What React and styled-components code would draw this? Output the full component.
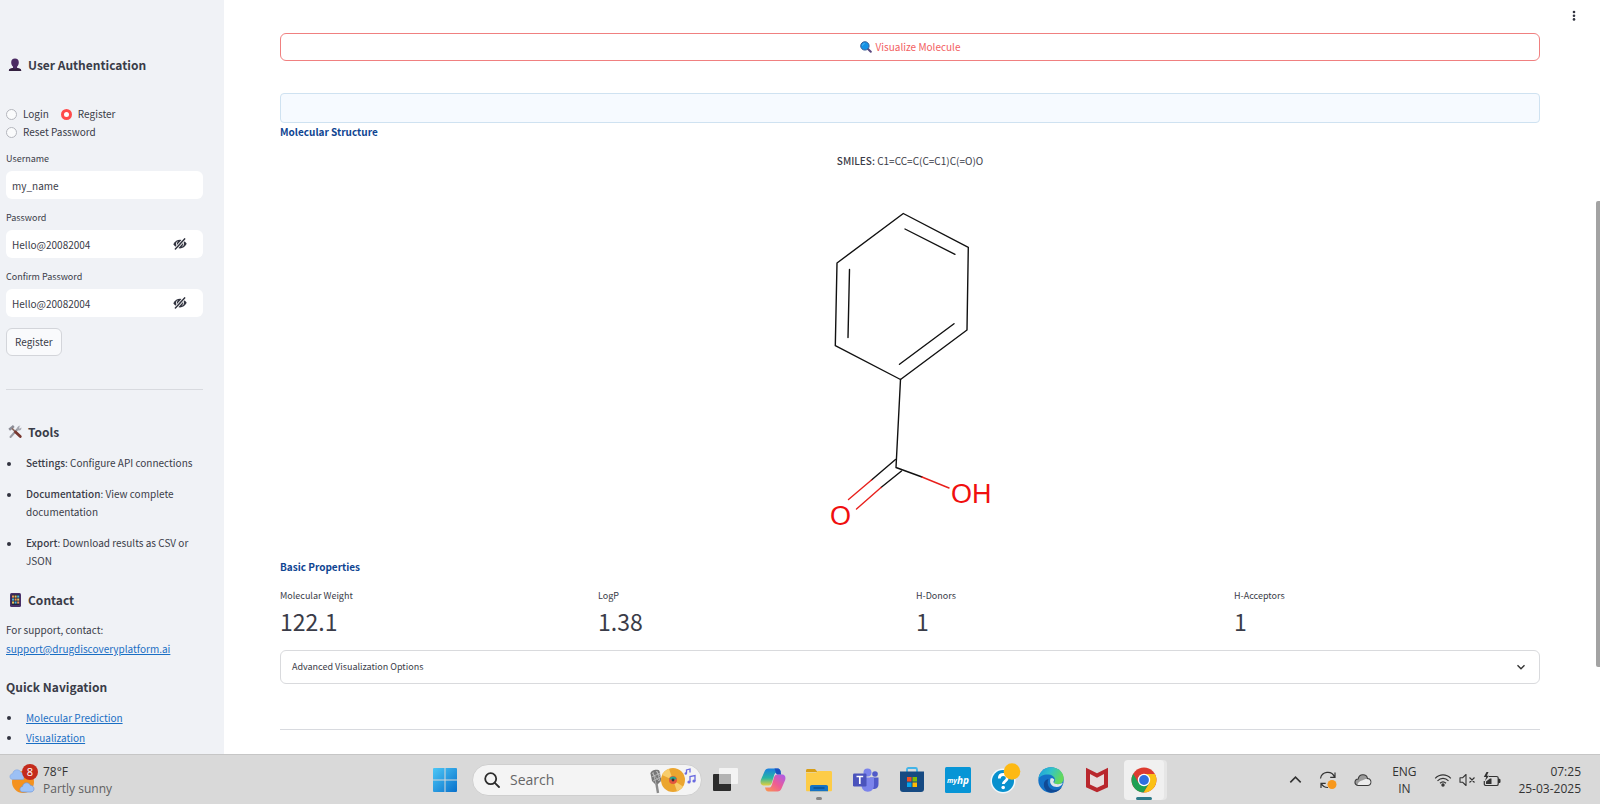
import React, { useState } from "react";
import styled, { createGlobalStyle } from "styled-components";

const GlobalStyle = createGlobalStyle`
  *, *::before, *::after { box-sizing: border-box; }
  html, body { margin: 0; padding: 0; }
  body {
    background: #fff;
    color: #3a3c48;
    font-family: "Noto Sans CJK SC", "Noto Sans", sans-serif;
    font-size: 10px;
    line-height: 18px;
    overflow: hidden;
  }
  button, input { font: inherit; color: inherit; }
  button { cursor: pointer; }
  svg { display: block; flex: none; }
`;

const Screen = styled.div`
  height: 100vh;
  display: flex;
  flex-direction: column;
`;

const Workspace = styled.div`
  flex: 1;
  min-height: 0;
  display: flex;
  position: relative;
`;

/* ---------- Sidebar ---------- */

const Sidebar = styled.aside`
  width: 224px;
  flex: none;
  background: #f0f2f6;
  padding: 53px 21px 0 6px;
  overflow: hidden;
`;

const SideHeading = styled.h3`
  display: flex;
  align-items: center;
  gap: 4px;
  margin: ${(p) => p.$top || 0}px 0 0;
  font-size: 12px;
  line-height: 24px;
  font-weight: 700;
  white-space: nowrap;
`;

const RadioGroup = styled.fieldset`
  display: flex;
  flex-wrap: wrap;
  column-gap: 12px;
  margin: 28px 0 10px;
  padding: 0;
  border: 0;
`;

const RadioLabel = styled.label`
  display: flex;
  align-items: center;
  gap: 6px;
  height: 18px;
`;

const Radio = styled.input`
  appearance: none;
  width: 11px;
  height: 11px;
  margin: 0;
  border: 1px solid #b4b6bd;
  border-radius: 50%;
  background: #fafbfc;
  &:checked {
    border: 3px solid #ff4b4b;
    background: #fff;
  }
`;

const Field = styled.div`
  display: flex;
  flex-direction: column;
  gap: 4px;
  margin-bottom: 11px;
`;

const FieldLabel = styled.label`
  font-size: 9px;
  line-height: 16px;
`;

const InputShell = styled.div`
  display: flex;
  align-items: center;
  height: 28px;
  padding: 0 16px 0 6px;
  border-radius: 6px;
  background: #fff;
`;

const TextInput = styled.input`
  flex: 1;
  min-width: 0;
  height: 26px;
  padding: 0;
  border: 0;
  outline: 0;
  background: transparent;
`;

const IconButton = styled.button`
  display: flex;
  padding: 0;
  border: 0;
  background: none;
`;

const SubmitButton = styled.button`
  height: 28px;
  padding: 0 8px;
  border: 1px solid #d3d5da;
  border-radius: 6px;
  background: #f9fafc;
`;

const Rule = styled.hr`
  margin: ${(p) => p.$top}px 0 0;
  border: 0;
  border-top: 1px solid #d8dadf;
`;

const ToolList = styled.ul`
  display: flex;
  flex-direction: column;
  gap: 13px;
  margin: 10px 0 0;
  padding: 0 0 0 20px;
`;

const NavList = styled.ul`
  margin: 9px 0 0;
  padding: 0 0 0 20px;
  line-height: 20px;
`;

const ListItem = styled.li`
  list-style: none;
  position: relative;
  &::before {
    content: "";
    position: absolute;
    left: -19px;
    top: 8px;
    width: 4px;
    height: 4px;
    border-radius: 50%;
    background: #31333f;
  }
`;

const Strong = styled.strong`
  font-weight: 500;
`;

const SupportText = styled.p`
  margin: 8px 0 0;
  line-height: 19px;
`;

const Link = styled.a`
  color: #1a6fc4;
  text-decoration: underline;
`;

/* ---------- Main area ---------- */

const Main = styled.main`
  flex: 1;
  min-width: 0;
  padding: 33px 60px 0 56px;
  overflow: hidden;
`;

const MenuButton = styled(IconButton)`
  position: absolute;
  top: 10px;
  right: 24px;
`;

const ScrollThumb = styled.div`
  position: absolute;
  right: 0;
  top: 201px;
  width: 4px;
  height: 466px;
  border-radius: 2px 0 0 2px;
  background: #a3a3a3;
`;

const VisualizeButton = styled.button`
  display: flex;
  align-items: center;
  justify-content: center;
  gap: 4px;
  width: 100%;
  height: 28px;
  border: 1px solid #f08080;
  border-radius: 6px;
  background: #fff;
  color: #f2605f;
`;

const InfoBox = styled.div`
  height: 30px;
  margin-top: 32px;
  border: 1px solid #cfe2f1;
  border-radius: 4px;
  background: #f6faff;
`;

const SectionTitle = styled.h4`
  margin: ${(p) => p.$top || 0}px 0 0;
  font-size: 10px;
  line-height: 18px;
  font-weight: 700;
  color: #0f4592;
`;

const Smiles = styled.p`
  margin: 11px 0 10px;
  text-align: center;
`;

const Structure = styled.svg`
  width: 300px;
  height: 368px;
  margin: 0 auto;
`;

const Metrics = styled.dl`
  display: grid;
  grid-template-columns: repeat(4, 1fr);
  gap: 12px;
  margin: 12px 0 14px;
`;

const MetricLabel = styled.dt`
  font-size: 9px;
  line-height: 16px;
`;

const MetricValue = styled.dd`
  margin: 2px 0 0;
  font-size: 23px;
  line-height: 30px;
`;

const Expander = styled.button`
  display: flex;
  align-items: center;
  justify-content: space-between;
  width: 100%;
  height: 34px;
  padding: 0 13px 0 11px;
  border: 1px solid #d9dadd;
  border-radius: 6px;
  background: #fff;
  font-size: 9px;
`;

/* ---------- Taskbar ---------- */

const Taskbar = styled.footer`
  flex: none;
  height: 50px;
  display: grid;
  grid-template-columns: 1fr auto 1fr;
  align-items: center;
  border-top: 1px solid #c6c6c6;
  background: #d9d9d9;
  color: #333;
  font-family: "Open Sans", "Noto Sans", sans-serif;
  font-size: 12px;
  line-height: 17px;
`;

const Weather = styled.div`
  display: flex;
  align-items: center;
  gap: 5px;
  padding-left: 8px;
`;

const WeatherNote = styled.div`
  color: #5f5f5f;
`;

const Dock = styled.div`
  display: flex;
  align-items: center;
`;

const SearchPill = styled.label`
  display: flex;
  align-items: center;
  gap: 10px;
  width: 230px;
  height: 32px;
  margin-left: 15px;
  padding: 0 5px 0 11px;
  border: 1px solid #cfcfcf;
  border-radius: 16px;
  background: #f4f4f4;
`;

const SearchInput = styled(TextInput)`
  font-size: 14px;
  &::placeholder { color: #666; opacity: 1; }
`;

const Apps = styled.div`
  display: grid;
  grid-template-columns: 48px repeat(9, 1fr);
  width: 465px;
`;

const AppButton = styled.button`
  display: flex;
  align-items: center;
  justify-content: center;
  position: relative;
  height: 40px;
  margin: 0 3px;
  padding: 0;
  border: 0;
  border-radius: 4px;
  background: ${(p) => (p.$active ? "#f0f0f0" : "transparent")};
  box-shadow: ${(p) => (p.$active ? "3px 0 0 #e6e6e6" : "none")};
  &::after {
    content: "";
    display: ${(p) => (p.$marker ? "block" : "none")};
    position: absolute;
    bottom: 0;
    width: ${(p) => (p.$active ? 16 : 6)}px;
    height: 3px;
    border-radius: 2px;
    background: ${(p) => p.$marker};
  }
`;

const Tray = styled.div`
  display: flex;
  align-items: center;
  justify-content: flex-end;
  padding-right: 19px;
`;

const TrayIcons = styled.div`
  display: flex;
  align-items: center;
  gap: ${(p) => p.$gap}px;
`;

const Language = styled.div`
  width: 60px;
  margin-left: 2px;
  text-align: center;
`;

const Clock = styled.div`
  margin-left: 17px;
  text-align: right;
`;

/* ---------- Drawings ---------- */

const PersonIcon = () => (
  <svg width="18" height="16" viewBox="0 0 18 16" aria-hidden="true">
    <path d="M9 1.5c2.4 0 3.9 1.6 3.8 4-.1 2-.8 3.400-1.800 4.300l.2 1.200 2.600.8c1 .4 1.400 1 1.400 2.200H2.900c0-1.200.4-1.800 1.400-2.200l2.600-.8.200-1.200C6 8.900 5.300 7.500 5.200 5.500 5.100 3.100 6.600 1.500 9 1.500z" fill="#4b2a63" />
    <path d="M4.300 11.800l2.600-.8c1 1 3.200 1 4.300 0l2.600.8c1 .4 1.400 1 1.400 2.200H2.900c0-1.200.4-1.800 1.400-2.200z" fill="#33203f" />
  </svg>
);

const ToolsIcon = () => (
  <svg width="18" height="16" viewBox="0 0 18 16" fill="none" aria-hidden="true">
    <path d="M4.500 13L12.500 4" stroke="#9a9ba3" strokeWidth="2" strokeLinecap="round" />
    <path d="M14.500 1.800l-2.300 2 .8 1.200 2.400-1.400c.2 2-1 3.300-2.800 2.900-1.500-.5-1.900-2-1.100-3.300.7-1.100 1.800-1.500 3-1.400z" fill="#a9abb4" />
    <path d="M3.200 5.800L7.800 1.900" stroke="#8b8c96" strokeWidth="2.600" />
    <path d="M6 4.400l4 4" stroke="#8b6b62" strokeWidth="1.600" />
    <path d="M9.500 8l4.800 4.600" stroke="#78372f" strokeWidth="2.800" strokeLinecap="round" />
  </svg>
);

const PhoneIcon = () => (
  <svg width="18" height="16" viewBox="0 0 18 16" aria-hidden="true">
    <rect x="4" y="1" width="11" height="14" rx="1.500" fill="#48306a" />
    <rect x="5.500" y="2.500" width="8" height="10.500" fill="#20243c" />
    {[0, 1, 2].map((r) =>
      [0, 1, 2].map((c) => (
        <rect key={`${r}${c}`} x={6 + c * 2.600} y={3.500 + r * 3} width="2" height="2.100" fill={["#f0955a", "#4fb3d9", "#e9c45b"][(r + c * 2) % 3]} />
      ))
    )}
  </svg>
);

const LensIcon = () => (
  <svg width="12" height="12" viewBox="0 0 12 12" aria-hidden="true">
    <path d="M7.500 7.500l3.300 3.300" stroke="#5a4a80" strokeWidth="2" strokeLinecap="round" />
    <circle cx="4.900" cy="4.900" r="4.200" fill="#1593e6" stroke="#3a5f97" strokeWidth="1" />
    <path d="M2.500 4.500c.2-1.100 1-1.800 2-1.900" stroke="#62c1f5" fill="none" />
  </svg>
);

const EyeOffIcon = () => (
  <svg width="14" height="12" viewBox="0 0 14 12" aria-hidden="true">
    <path d="M.3 6.300C2 3.200 4.300 1.800 7 1.800s5 1.400 6.700 4c-1.700 3.200-4 4.600-6.700 4.600S2 9.200.3 6.300z" fill="#31333f" />
    <path d="M4.300 3.500C3 5.200 3.300 7 4.500 8.300M9.700 3.700c1.200 1.500 1 3.400-.3 4.700" stroke="#fff" strokeWidth=".9" fill="none" />
    <path d="M2.200 11.300L11.800.7" stroke="#fff" strokeWidth="3.200" />
    <path d="M2.400 11L11.600.9" stroke="#31333f" strokeWidth="1.500" strokeLinecap="round" />
  </svg>
);

const ChevronIcon = ({ up, size = 10, weight = 1.400 }) => (
  <svg width={size} height={size} viewBox="0 0 10 10" fill="none" aria-hidden="true">
    <path d={up ? "M1 7.200l4-4 4 4" : "M1.500 3.200L5 6.700l3.500-3.500"} stroke="#333" strokeWidth={weight} />
  </svg>
);

const Molecule = () => (
  <Structure viewBox="-50 -10 300 368" role="img" aria-label="Benzoic acid structure">
    <g fill="none" stroke="#111" strokeWidth="1.400" strokeLinecap="round" strokeLinejoin="round">
      <path d="M93.300 23.500L158.300 57.300L157 140L90.500 189.500L25.300 155.700L27 73Z" />
      <path d="M95 39L145 64.300M144 133.700L89.500 174.300M38 147.500L39.500 79.500" />
      <path d="M90.500 189.500L86 277.500L112 287" />
      <path d="M85.500 269.500L61.500 290M91.500 281L71 297.500" />
    </g>
    <g fill="none" stroke="#e8201c" strokeWidth="1.400" strokeLinecap="round">
      <path d="M112 287L139 298M61.500 290L38.500 309.500M71 297.500L46.500 319" />
    </g>
    <g fill="#f00f0f" fontFamily="Liberation Sans, sans-serif" fontSize="27">
      <text x="20" y="335">O</text>
      <text x="141" y="313">OH</text>
    </g>
  </Structure>
);

const WeatherIcon = () => (
  <svg width="30" height="32" viewBox="0 0 30 32" aria-hidden="true">
    <circle cx="15" cy="18" r="11" fill="#f4921f" />
    <path d="M5 15.500c-4 0-4-5.500-.3-5.800C5.200 5 11.500 4.500 13 8.500c3 .3 3.600 3.400 2.500 7z" fill="#9cc0f5" stroke="#83a6e0" strokeWidth=".6" />
    <path d="M15 28c-4 0-4-5-.5-5.600.6-4.400 6.500-4.800 8-1 4.500.2 4.500 6.400.5 6.600z" fill="#9fc4f8" stroke="#6f95d8" strokeWidth=".7" />
    <circle cx="22" cy="8" r="8" fill="#c42b1c" />
    <text x="22" y="12" textAnchor="middle" fontSize="11" fill="#fff" fontFamily="Open Sans, sans-serif">8</text>
  </svg>
);

const StartIcon = () => (
  <svg width="24" height="24" viewBox="0 0 24 24" aria-hidden="true">
    <defs>
      <linearGradient id="win" x1="0" y1="0" x2="1" y2="1">
        <stop offset="0" stopColor="#4cc7f6" />
        <stop offset="1" stopColor="#0870cb" />
      </linearGradient>
    </defs>
    <path d="M1 0h10.500v11.500H0V1a1 1 0 011-1zM12.500 0H23a1 1 0 011 1v10.500H12.500zM0 12.500h11.500V24H1a1 1 0 01-1-1zM12.500 12.500H24V23a1 1 0 01-1 1H12.500z" fill="url(#win)" />
  </svg>
);

const SearchIcon = () => (
  <svg width="16" height="16" viewBox="0 0 16 16" fill="none" stroke="#2c2c2c" strokeWidth="1.800" strokeLinecap="round" aria-hidden="true">
    <circle cx="6.700" cy="6.700" r="5.500" />
    <path d="M10.800 10.800L15 15" />
  </svg>
);

const MusicIcon = () => (
  <svg width="48" height="28" viewBox="0 0 48 28" aria-hidden="true">
    <path d="M2.500 7.500c0-3 7-5 9-2.500l2 9.500-4 4H7.500L4 15z" fill="#777" />
    <path d="M4 7l7 8M8 5l5 6M3.500 11l9-4M5 15l8-4M5 6l3 12M9 5l3 10" stroke="#c9c9c9" strokeWidth=".7" />
    <path d="M8.500 18l1.500 9" stroke="#8a8a8a" strokeWidth="2.400" />
    <circle cx="25" cy="14" r="12" fill="#eba52f" />
    <path d="M25 14L14 9a12 12 0 017-6.300zM25 14l10 6.500a12 12 0 01-6 4.800z" fill="#f8cd6b" />
    <circle cx="25" cy="14" r="4" fill="#e4573d" />
    <path d="M21.300 13a4 4 0 017.400 0L25 14z" fill="#27a890" />
    <circle cx="25" cy="14" r="1.400" fill="#333" />
    <g fill="none" stroke="#6a6be0" strokeWidth="1.300">
      <path d="M38.500 7.500V4l3.500-1v3.500M42 16v-5.500l5-1V15" />
    </g>
    <g fill="#6a6be0">
      <circle cx="37.800" cy="7.500" r="1.200" /><circle cx="41" cy="16" r="1.600" /><circle cx="46" cy="15" r="1.600" />
    </g>
  </svg>
);

const TaskViewIcon = () => (
  <svg width="26" height="26" viewBox="0 0 26 26" aria-hidden="true">
    <rect x="0" y="7" width="18" height="17" rx="1" fill="#2b2b2b" />
    <rect x="6" y="1" width="19" height="16" rx="1" fill="#f3f3f3" />
    <path d="M6 7h12v10H6z" fill="#b3b3b3" />
  </svg>
);

const CopilotIcon = () => (
  <svg width="26" height="26" viewBox="0 0 26 26" aria-hidden="true">
    <defs>
      <linearGradient id="cpA" x1="0" y1="0" x2="0" y2="1">
        <stop offset="0" stopColor="#1b7fe0" /><stop offset=".55" stopColor="#27b5a4" /><stop offset="1" stopColor="#e3cf3b" />
      </linearGradient>
      <linearGradient id="cpB" x1="1" y1="0" x2="0" y2="1">
        <stop offset="0" stopColor="#a55cf0" /><stop offset=".5" stopColor="#ee5c94" /><stop offset="1" stopColor="#fb9a4a" />
      </linearGradient>
    </defs>
    <path d="M8.500 1.500h9c2 0 3 1.500 3.500 4h-4c-1.500 0-2.300 1-2.800 2.600L12 15.500c-.7 2-1.500 3-3.500 3H4C1 18.500 0 16 .8 13L4.500 4.500c.8-2 2-3 4-3z" fill="url(#cpA)" />
    <path d="M17.500 24.500h-9c-2 0-3-1.500-3.500-4h4c1.500 0 2.300-1 2.800-2.600L14 10.500c.7-2 1.500-3 3.500-3H22c3 0 4 2.500 3.200 5.500L21.500 21.500c-.8 2-2 3-4 3z" fill="url(#cpB)" />
    <path d="M14.500 1.500h3c2 0 3 1.500 3.700 6H17.500c-2 0-2-4.500-3-6z" fill="#1c4fc0" />
  </svg>
);

const FolderIcon = () => (
  <svg width="26" height="24" viewBox="0 0 26 24" aria-hidden="true">
    <path d="M0 2.500C0 1.600.6 1 1.500 1H9l2.500 3H0z" fill="#d99e15" />
    <path d="M0 4.500h10L12 3h12.500c1 0 1.500.6 1.500 1.500V22c0 .8-.5 1.300-1.300 1.300H1.300C.5 23.300 0 22.800 0 22z" fill="#fdcc47" />
    <path d="M4 23.300v-4.500c0-1 .7-1.800 1.800-1.800h14.400c1.100 0 1.800.8 1.800 1.800v4.500z" fill="#1673c4" />
    <path d="M7.500 20h11" stroke="#0b4f92" strokeWidth="1.500" />
  </svg>
);

const TeamsIcon = () => (
  <svg width="26" height="24" viewBox="0 0 26 24" aria-hidden="true">
    <circle cx="22" cy="6" r="2.800" fill="#5059c9" />
    <path d="M17 9.500h8.500v6.500c0 3-1.500 4.700-4 5H17z" fill="#5059c9" />
    <circle cx="14.500" cy="4.500" r="4" fill="#7b83eb" />
    <path d="M8.500 9.500H21V17c0 4-2.500 6.700-6.200 6.700S8.500 21 8.500 17z" fill="#7b83eb" />
    <rect x="0" y="5.500" width="13.500" height="13" rx="1.200" fill="#4b53bc" />
    <path d="M3.500 8.500h6.700M6.800 8.500v7.500" stroke="#fff" strokeWidth="1.700" />
  </svg>
);

const StoreIcon = () => (
  <svg width="26" height="26" viewBox="0 0 26 26" aria-hidden="true">
    <path d="M8 5V2.500C8 1.700 8.500 1 9.500 1h7c1 0 1.500.7 1.500 1.500V5" fill="none" stroke="#42b4e8" strokeWidth="1.800" />
    <path d="M1 4.500h24V22c0 1.800-1 3-3 3H4c-2 0-3-1.200-3-3z" fill="#164a82" />
    <path d="M8 10h4.500v4.500H8z" fill="#f04f24" /><path d="M13.500 10H18v4.500h-4.500z" fill="#80bb03" />
    <path d="M8 15.500h4.500V20H8z" fill="#04a6ef" /><path d="M13.500 15.500H18V20h-4.500z" fill="#fdb904" />
  </svg>
);

const HpIcon = () => (
  <svg width="26" height="26" viewBox="0 0 26 26" aria-hidden="true">
    <rect width="26" height="26" rx="1.500" fill="#0795d6" />
    <g fill="#fff" fontFamily="Open Sans, sans-serif" fontStyle="italic" fontWeight="700">
      <text x="2" y="16" fontSize="7">my</text>
      <text x="12" y="17" fontSize="10">hp</text>
    </g>
  </svg>
);

const HelpIcon = () => (
  <svg width="34" height="34" viewBox="0 0 34 34" aria-hidden="true">
    <circle cx="15" cy="18" r="12.500" fill="#f2f8fb" />
    <circle cx="15" cy="18" r="11" fill="#0891ce" />
    <path d="M11.300 15.500c0-2.500 1.700-4 4-4s4 1.500 4 3.500c0 3-4 3.200-4 6" fill="none" stroke="#fff" strokeWidth="2.800" />
    <circle cx="15.200" cy="24.500" r="1.800" fill="#fff" />
    <circle cx="24" cy="8.500" r="8.300" fill="#fdb913" />
  </svg>
);

const EdgeIcon = () => (
  <svg width="26" height="26" viewBox="0 0 26 26" aria-hidden="true">
    <defs>
      <linearGradient id="edA" x1="0" y1="0" x2="1" y2="0.400">
        <stop offset="0" stopColor="#1a9be0" /><stop offset=".5" stopColor="#32c3c9" /><stop offset="1" stopColor="#64d95a" />
      </linearGradient>
    </defs>
    <circle cx="13" cy="13" r="12.700" fill="#1473c8" />
    <path d="M.4 12C1.200 5 6.500.3 13 .3c7.500 0 12.700 5.200 12.700 10.700 0 4-2.700 6.300-6 6.300-2.500 0-4-.8-3.800-1.800.5-.8 1-1.600 1-2.800C16.900 9.500 13.500 7.500 9.500 7.500 5 7.500 1.500 9.500.4 12z" fill="url(#edA)" />
    <path d="M10.500 12c-2 3.500-.5 10.500 6 11 3 .2 5.300-1 7.500-3-2.500 4-6.500 5.700-11 5.700C7.500 25 5.200 20 6 16c.6-2.300 2.300-3.700 4.500-4z" fill="#104a95" />
    <path d="M12.500 11.500c1.500-.8 3.200-.2 3.800 1.200-.2 1-1 1.700-.8 2.600.2 1.300 2.200 1.900 4.500 1.900 1.800 0 3.500-.5 4.800-1.400-.6 2.700-3 4.200-6 4.200-4.300 0-8-3-6.300-8.500z" fill="#e0e6ea" />
  </svg>
);

const ShieldIcon = () => (
  <svg width="24" height="26" viewBox="0 0 24 26" aria-hidden="true">
    <path d="M1 .8l11 5.500L23 .8v19.400l-11 5-11-5z" fill="#b9272d" />
    <path d="M5 7l7 3.700L19 7v10.500l-7 3.300-7-3.300z" fill="#e6dcdc" />
  </svg>
);

const ChromeIcon = () => (
  <svg width="26" height="26" viewBox="0 0 26 26" aria-hidden="true">
    <circle cx="13" cy="13" r="12.500" fill="#dd3b30" />
    <path d="M2.200 6.700A12.500 12.500 0 0012.500 25.500L18.400 16 13 13 7.600 16z" fill="#1fa054" />
    <path d="M13 7h10.900A12.500 12.500 0 0112.700 25.500L18.400 16z" fill="#fbc116" />
    <circle cx="13" cy="13" r="6.200" fill="#fff" />
    <circle cx="13" cy="13" r="4.900" fill="#2f6fe0" />
  </svg>
);

const SyncIcon = () => (
  <svg width="18" height="18" viewBox="0 0 18 18" fill="none" aria-hidden="true">
    <path d="M1.500 7.500A7.300 7.300 0 0115.500 6M16 1.500V6.300h-4.800M9 16.500a7.300 7.300 0 01-6.700-4M2 17v-4.700h4.700" stroke="#333" strokeWidth="1.200" />
    <circle cx="13" cy="13.500" r="4.500" fill="#f7981d" />
  </svg>
);

const CloudIcon = () => (
  <svg width="18" height="14" viewBox="0 0 18 14" aria-hidden="true">
    <path d="M4.500 12.500C-.5 12.500.2 6 4.200 6 5 .5 12.500.3 13.500 5.500c4.500.3 4.500 7-.2 7z" fill="#9a9a9a" stroke="#3a3a3a" strokeWidth="1.100" />
    <path d="M4.500 12C2 12 5.500 7.800 8 7.500c2.500-1.500 4.800-2 6.500-1 3 1 2.500 5.500-1.200 5.500z" fill="#ececec" />
  </svg>
);

const WifiIcon = () => (
  <svg width="18" height="14" viewBox="0 0 18 14" fill="none" stroke="#333" strokeWidth="1.200" aria-hidden="true">
    <path d="M1.200 5.300c4.500-4.600 11.100-4.600 15.600 0M3.500 7.800c3.200-3.200 7.800-3.200 11 0M6 10.300c1.800-1.700 4.200-1.700 6 0" />
    <circle cx="9" cy="12" r="1.100" fill="#333" />
  </svg>
);

const MuteIcon = () => (
  <svg width="17" height="14" viewBox="0 0 17 14" fill="none" stroke="#333" strokeWidth="1.100" strokeLinejoin="round" aria-hidden="true">
    <path d="M1 4.800h2.500L7 1.500v11L3.500 9.200H1zM10.500 4.500l5 5M15.500 4.500l-5 5" />
  </svg>
);

const BatteryIcon = () => (
  <svg width="18" height="16" viewBox="0 0 18 16" fill="none" aria-hidden="true">
    <path d="M6 4.500h7.500c1 0 1.700.6 1.700 1.600v5.800c0 1-.7 1.600-1.700 1.600H3c-1 0-1.700-.6-1.700-1.600V9" stroke="#333" strokeWidth="1.200" />
    <path d="M15.500 7.300h1.500v3.200h-1.500z" fill="#333" stroke="#333" />
    <path d="M3 12V9.500l4-3h1.500V12z" fill="#333" />
    <path d="M3.500 0L.8 5h2.400L2 9l4-5.300H3.800L5.500 0z" fill="#333" />
  </svg>
);

/* ---------- Composition ---------- */

const modes = ["Login", "Register", "Reset Password"];

const tools = [
  ["Settings", "Configure API connections"],
  ["Documentation", "View complete documentation"],
  ["Export", "Download results as CSV or JSON"],
];

const metrics = [
  ["Molecular Weight", "122.1"],
  ["LogP", "1.38"],
  ["H-Donors", "1"],
  ["H-Acceptors", "1"],
];

const apps = [
  { name: "Task view", Icon: TaskViewIcon },
  { name: "Copilot", Icon: CopilotIcon },
  { name: "File Explorer", Icon: FolderIcon, marker: "#858585" },
  { name: "Teams", Icon: TeamsIcon },
  { name: "Store", Icon: StoreIcon },
  { name: "myHP", Icon: HpIcon },
  { name: "Help", Icon: HelpIcon },
  { name: "Edge", Icon: EdgeIcon },
  { name: "McAfee", Icon: ShieldIcon },
  { name: "Chrome", Icon: ChromeIcon, marker: "#2c7a89", active: true },
];

function TextField({ id, label, initial, secret }) {
  const [value, setValue] = useState(initial);
  const [hidden, setHidden] = useState(false);
  return (
    <Field>
      <FieldLabel htmlFor={id}>{label}</FieldLabel>
      <InputShell>
        <TextInput id={id} type={hidden ? "password" : "text"} value={value} onChange={(e) => setValue(e.target.value)} />
        {secret && (
          <IconButton type="button" aria-label="Toggle password visibility" onClick={() => setHidden(!hidden)}>
            <EyeOffIcon />
          </IconButton>
        )}
      </InputShell>
    </Field>
  );
}

export default function App() {
  const [mode, setMode] = useState("Register");
  return (
    <Screen>
      <GlobalStyle />
      <Workspace>
        <Sidebar>
          <SideHeading><PersonIcon />User Authentication</SideHeading>
          <RadioGroup aria-label="Account action">
            {modes.map((m) => (
              <RadioLabel key={m}>
                <Radio type="radio" name="mode" checked={mode === m} onChange={() => setMode(m)} />
                {m}
              </RadioLabel>
            ))}
          </RadioGroup>
          <TextField id="username" label="Username" initial="my_name" />
          <TextField id="password" label="Password" initial="Hello@20082004" secret />
          <TextField id="confirm" label="Confirm Password" initial="Hello@20082004" secret />
          <SubmitButton type="button">Register</SubmitButton>
          <Rule $top={33} />
          <SideHeading $top={30}><ToolsIcon />Tools</SideHeading>
          <ToolList>
            {tools.map(([name, text]) => (
              <ListItem key={name}><Strong>{name}</Strong>: {text}</ListItem>
            ))}
          </ToolList>
          <SideHeading $top={18}><PhoneIcon />Contact</SideHeading>
          <SupportText>
            For support, contact:<br />
            <Link href="mailto:support@drugdiscoveryplatform.ai">support@drugdiscoveryplatform.ai</Link>
          </SupportText>
          <SideHeading $top={17}>Quick Navigation</SideHeading>
          <NavList>
            <ListItem><Link href="#prediction">Molecular Prediction</Link></ListItem>
            <ListItem><Link href="#visualization">Visualization</Link></ListItem>
          </NavList>
        </Sidebar>

        <Main>
          <VisualizeButton type="button"><LensIcon />Visualize Molecule</VisualizeButton>
          <InfoBox />
          <SectionTitle>Molecular Structure</SectionTitle>
          <Smiles><Strong>SMILES:</Strong> C1=CC=C(C=C1)C(=O)O</Smiles>
          <Molecule />
          <SectionTitle $top={10}>Basic Properties</SectionTitle>
          <Metrics>
            {metrics.map(([label, value]) => (
              <div key={label}>
                <MetricLabel>{label}</MetricLabel>
                <MetricValue>{value}</MetricValue>
              </div>
            ))}
          </Metrics>
          <Expander type="button" aria-expanded="false">Advanced Visualization Options<ChevronIcon /></Expander>
          <Rule $top={45} />
        </Main>

        <MenuButton type="button" aria-label="Menu">
          <svg width="4" height="12" viewBox="0 0 4 12" fill="#31333f">
            <circle cx="2" cy="2" r="1.300" /><circle cx="2" cy="5.700" r="1.300" /><circle cx="2" cy="9.400" r="1.300" />
          </svg>
        </MenuButton>
        <ScrollThumb />
      </Workspace>

      <Taskbar>
        <Weather>
          <WeatherIcon />
          <div>
            <div>78°F</div>
            <WeatherNote>Partly sunny</WeatherNote>
          </div>
        </Weather>
        <Dock>
          <IconButton type="button" aria-label="Start"><StartIcon /></IconButton>
          <SearchPill>
            <SearchIcon />
            <SearchInput type="text" placeholder="Search" aria-label="Search" />
            <MusicIcon />
          </SearchPill>
          <Apps>
            {apps.map(({ name, Icon, marker, active }) => (
              <AppButton key={name} type="button" aria-label={name} $marker={marker} $active={active}><Icon /></AppButton>
            ))}
          </Apps>
        </Dock>
        <Tray>
          <TrayIcons $gap={17}>
            <ChevronIcon up size={13} weight={1.200} />
            <SyncIcon />
            <CloudIcon />
          </TrayIcons>
          <Language>ENG<br />IN</Language>
          <TrayIcons $gap={7}>
            <WifiIcon />
            <MuteIcon />
            <BatteryIcon />
          </TrayIcons>
          <Clock>07:25<br />25-03-2025</Clock>
        </Tray>
      </Taskbar>
    </Screen>
  );
}
